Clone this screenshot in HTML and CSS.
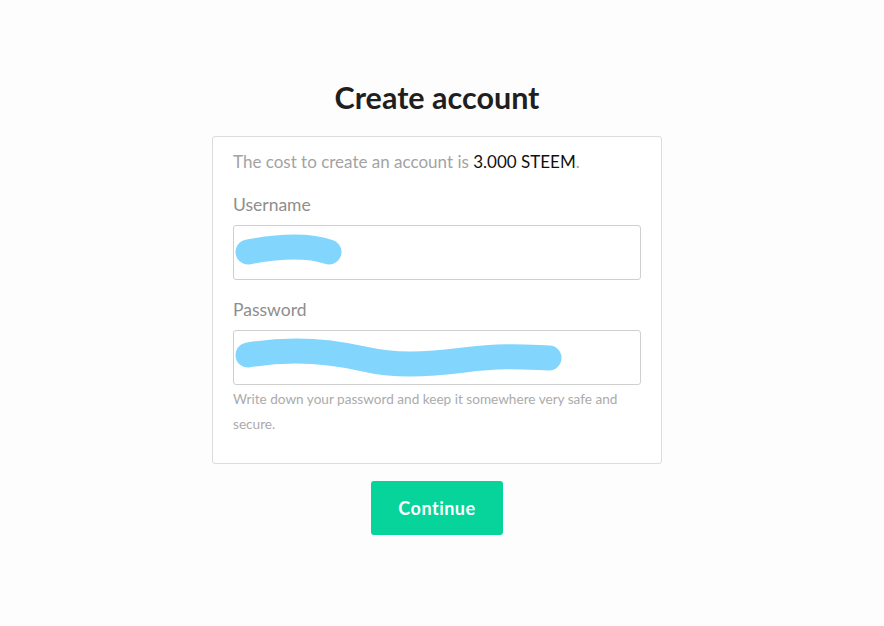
FILE: index.html
```html
<!DOCTYPE html>
<html lang="en">
<head>
    <meta charset="UTF-8">
    <meta name="viewport" content="width=device-width, initial-scale=1.0">
    <title>Create account</title>
    <link rel="stylesheet" href="styles.css">
</head>
<body>
    <div class="page">
        <h1>Create account</h1>
        <div class="card">
            <p class="cost">The cost to create an account is <span class="amount">3.000 STEEM</span>.</p>
            <label class="label">Username</label>
            <div class="field">
                <svg class="scribble" width="408" height="53" viewBox="0 0 408 53">
                    <path d="M14 26 C 40 21, 72 18, 95 26" fill="none" stroke="#82d5fc" stroke-width="25" stroke-linecap="round"/>
                </svg>
            </div>
            <label class="label">Password</label>
            <div class="field">
                <svg class="scribble" width="408" height="53" viewBox="0 0 408 53">
                    <path d="M14 24 C 60 16, 100 21, 130 28 S 190 34, 230 29 S 290 26, 315 27" fill="none" stroke="#82d5fc" stroke-width="25" stroke-linecap="round"/>
                </svg>
            </div>
            <p class="hint">Write down your password and keep it somewhere very safe and secure.</p>
        </div>
        <button class="continue">Continue</button>
    </div>
</body>
</html>
```

FILE: styles.css
```css
body { margin: 0; background: #fdfdfd; font-family: Lato, "Open Sans", sans-serif; }
.page { display: flex; flex-direction: column; align-items: center; padding: 77px 10px 0 0; }
h1 { margin: 0; font-size: 30.5px; line-height: 40px; font-weight: 700; color: #1f1f1f; }
.card { margin-top: 19px; width: 450px; box-sizing: border-box; padding: 12px 20px 26px; background: #fff; border: 1px solid #dcdcdc; border-radius: 3px; display: flex; flex-direction: column; }
.cost { margin: 0; font-size: 17px; line-height: 26px; color: #a3a3a3; }
.amount { color: #111; }
.label { margin-top: 18px; font-size: 17.5px; line-height: 24px; color: #8e8e8e; }
.field { margin-top: 8px; height: 55px; box-sizing: border-box; border: 1px solid #cfcfcf; border-radius: 3px; background: #fff; }
.scribble { display: block; }
.hint { margin: 2px 0 0; font-size: 13.6px; line-height: 25px; color: #ababab; }
.continue { margin-top: 17px; width: 132px; height: 54px; border: none; border-radius: 3px; background: #06d49b; color: #fff; font-family: Lato, "Open Sans", sans-serif; font-size: 18px; font-weight: 700; letter-spacing: 0.5px; cursor: pointer; }
```
